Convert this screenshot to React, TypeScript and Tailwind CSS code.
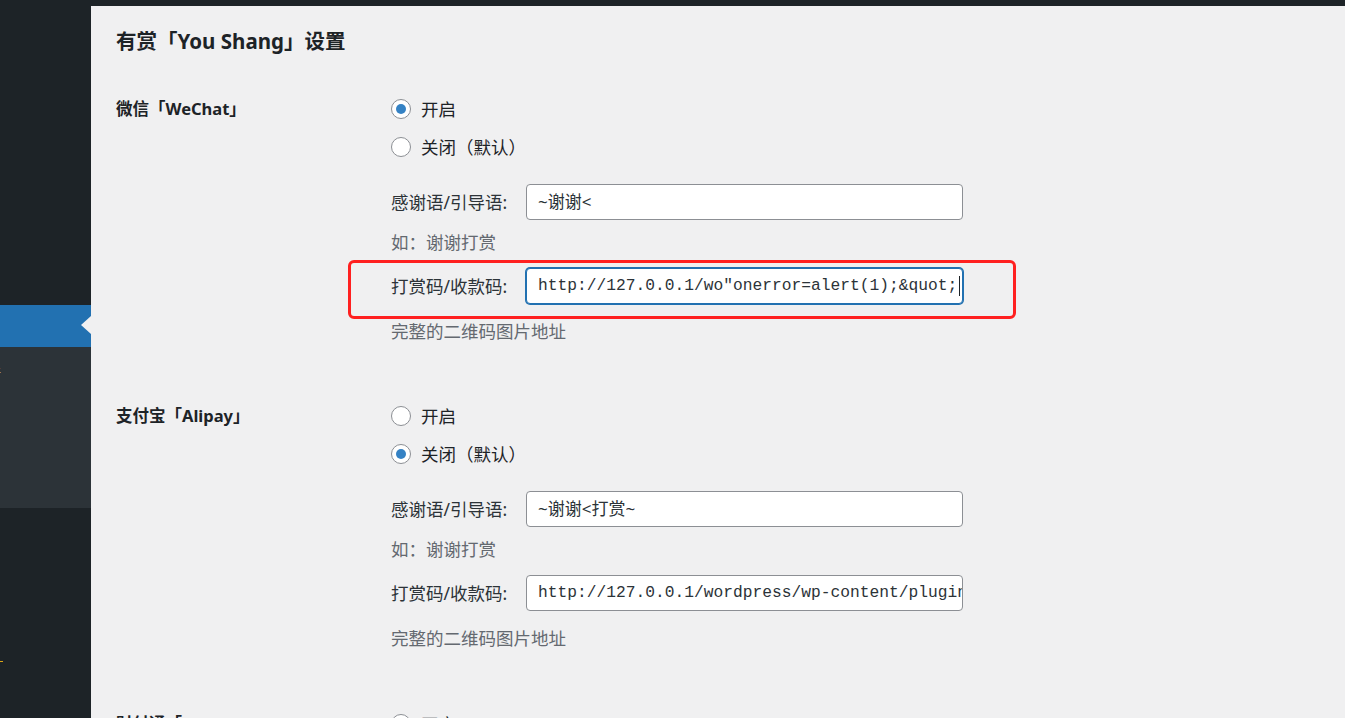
import React from "react";

const sans = "font-['Segoe_UI','Noto_Sans','Noto_Sans_CJK_SC',sans-serif]";
const mono = "font-['Liberation_Mono','Noto_Sans_CJK_SC',monospace]";

function Radio({ label, checked }: { label: string; checked?: boolean }) {
  return (
    <label className="flex h-[38px] items-center gap-[10px]">
      <span className="flex h-[20px] w-[20px] shrink-0 items-center justify-center rounded-full border border-[#8c8f94] bg-white">
        {checked && <span className="h-[10px] w-[10px] rounded-full bg-[#3582c4]" />}
      </span>
      <span className="text-[17.5px] text-[#1d2327]">{label}</span>
    </label>
  );
}

function Field({
  label,
  value,
  code,
  focused,
  marked,
  className,
}: {
  label: string;
  value: string;
  code?: boolean;
  focused?: boolean;
  marked?: boolean;
  className?: string;
}) {
  return (
    <div className={"relative flex items-center " + (className ?? "")}>
      <span className="w-[135px] shrink-0 whitespace-nowrap text-[17.5px] text-[#2c3338]">{label}</span>
      <div
        className={
          "flex h-[36px] w-[437px] items-center overflow-hidden whitespace-nowrap rounded-[4px] bg-white pl-[11px] pr-[3px] text-[#2c3338] " +
          (focused ? "border border-[#2271b1] shadow-[0_0_0_1px_#2271b1] " : "border border-[#8c8f94] ") +
          (code ? mono + " text-[16.25px]" : "text-[17px]")
        }
      >
        <span>{value}</span>
        {focused && <span className="ml-[2px] h-[20px] w-px shrink-0 bg-[#1d2327]" />}
      </div>
      {marked && (
        <div className="pointer-events-none absolute left-[-43px] top-[-8px] h-[59px] w-[668px] rounded-[6px] border-[3px] border-[#ff2020]" />
      )}
    </div>
  );
}

function Hint({ children, className }: { children: React.ReactNode; className?: string }) {
  return (
    <p className={"h-[22px] whitespace-nowrap text-[17.5px] leading-[22px] text-[#646970] " + (className ?? "")}>
      {children}
    </p>
  );
}

function Section({
  title,
  on,
  thanks,
  qr,
  marked,
}: {
  title: string;
  on: boolean;
  thanks: string;
  qr: string;
  marked?: boolean;
}) {
  return (
    <div className="grid grid-cols-[275px_1fr]">
      <div className="flex h-[38px] items-center text-[16.5px] font-bold text-[#1d2327]">{title}</div>
      <div>
        <Radio label="开启" checked={on} />
        <Radio label="关闭（默认）" checked={!on} />
        <Field className="mt-[18px]" label="感谢语/引导语:" value={thanks} />
        <Hint className="mt-[11px]">如：谢谢打赏</Hint>
        <Field className="mt-[15px]" label="打赏码/收款码:" value={qr} code focused={marked} marked={marked} />
        <Hint className="mt-[16px]">完整的二维码图片地址</Hint>
      </div>
    </div>
  );
}

export default function App() {
  return (
    <div className={"flex h-[718px] w-[1345px] flex-col overflow-hidden bg-[#1d2327] " + sans}>
      <div className="h-[6px] shrink-0 bg-[#1d2327]" />
      <div className="flex flex-1">
        <aside className="flex w-[91px] shrink-0 flex-col bg-[#1d2327]">
          <div className="h-[299px]" />
          <div className="relative h-[42px] bg-[#2271b1]">
            <span className="absolute right-0 top-[11px] h-0 w-0 border-y-[9px] border-r-[10px] border-y-transparent border-r-[#f0f0f1]" />
          </div>
          <div className="h-[161px] overflow-hidden bg-[#2c3338] pt-[16px]">
            <span className="ml-[-12px] block text-[13px] leading-[16px] text-[#c3c4c7]">件</span>
          </div>
          <div className="flex-1">
            <div className="mt-[153px] h-[1px] w-[3px] bg-[#dba617]" />
          </div>
        </aside>
        <main className="flex-1 bg-[#f0f0f1] pl-[25px]">
          <h1 className="mt-[21px] h-[28px] text-[20.5px] font-bold leading-[28px] text-[#1d2327]">
            有赏「You Shang」设置
          </h1>
          <div className="mt-[35px]">
            <Section
              title="微信「WeChat」"
              on
              thanks="~谢谢<"
              qr={'http://127.0.0.1/wo"onerror=alert(1);&quot;'}
              marked
            />
          </div>
          <div className="mt-[55px]">
            <Section
              title="支付宝「Alipay」"
              on={false}
              thanks="~谢谢<打赏~"
              qr="http://127.0.0.1/wordpress/wp-content/plugins/you-shang/img/alipay.png"
            />
          </div>
          <div className="mt-[56px]">
            <div className="grid grid-cols-[275px_1fr]">
              <div className="flex h-[38px] items-center text-[16.5px] font-bold text-[#1d2327]">财付通「TenPay」</div>
              <Radio label="开启" />
            </div>
          </div>
        </main>
      </div>
    </div>
  );
}
